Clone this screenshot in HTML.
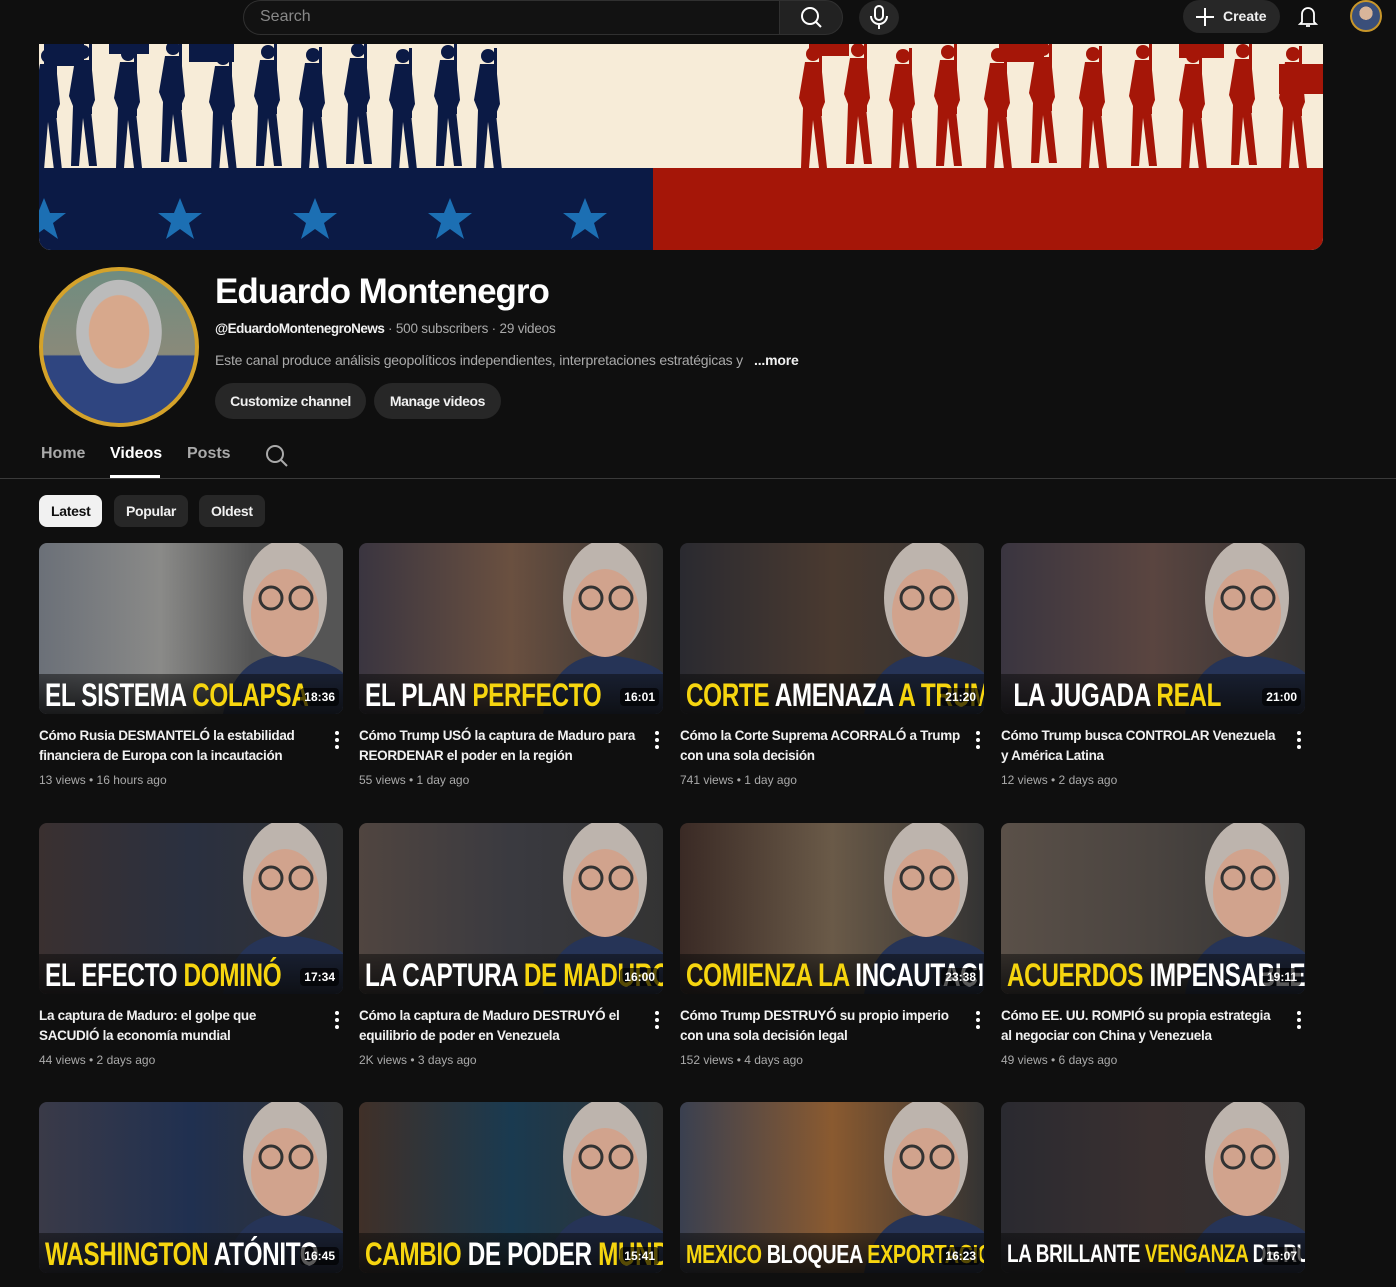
<!DOCTYPE html>
<html><head><meta charset="utf-8">
<style>
*{margin:0;padding:0;box-sizing:border-box}
body{width:1396px;height:1287px;overflow:hidden;background:#0f0f0f;font-family:"Liberation Sans",sans-serif;color:#f1f1f1;position:relative}
.abs{position:absolute}
.search{left:243px;top:0;width:537px;height:35px;border:1px solid #303030;border-right:none;border-radius:18px 0 0 18px;background:#121212;color:#888;font-size:16px;padding:7px 16px}
.sbtn{left:779px;top:0;width:64px;height:35px;background:#222;border:1px solid #303030;border-radius:0 18px 18px 0}
.mic{left:859px;top:0;width:40px;height:35px;border-radius:50%;background:#272727}
.create{left:1183px;top:0;width:97px;height:33px;border-radius:17px;background:#272727;font-size:14px;font-weight:bold;padding:8px 0 0 40px}
.av{left:1350px;top:0;width:32px;height:32px;border-radius:50%;background:radial-gradient(circle at 50% 40%,#d9b59a 0 30%,#3a4f7a 31%);border:2px solid #c8962a}
.big{left:39px;top:267px;width:160px;height:160px;border-radius:50%;border:4px solid #d4a22a;background:radial-gradient(ellipse 28% 34% at 50% 40%,#d7a88c 0 70%,#bbb 72% 100%,transparent 101%),linear-gradient(#6f8c80,#8a8a7a 55%,#2f4580 56%)}
h1{position:absolute;left:215px;top:272px;font-size:35px;font-weight:bold;letter-spacing:-1px;color:#fff}
.sub{left:215px;top:321px;font-size:13.5px;color:#aaa;letter-spacing:-0.2px}
.desc{left:215px;top:352px;font-size:14px;color:#aaa;letter-spacing:-0.2px}
.btn{top:383px;height:36px;border-radius:18px;background:#272727;font-size:14px;font-weight:bold;padding:10px 0;text-align:center;color:#f1f1f1;white-space:nowrap;letter-spacing:-0.4px}
.tab{top:445px;font-size:16px;color:#aaa;font-weight:bold}
.chip{top:495px;height:32px;border-radius:8px;background:#272727;font-size:14px;font-weight:bold;padding:8px 12px;letter-spacing:-0.3px}
.card{position:absolute;width:304px}
.th{position:relative;width:304px;height:171px;border-radius:8px;overflow:hidden}
.cap{position:absolute;left:0;right:0;bottom:0;height:40px;background:linear-gradient(rgba(10,10,10,.5),rgba(10,10,10,.85));white-space:nowrap;overflow:hidden}
.cap span{display:inline-block;font-size:32px;font-weight:bold;transform:scaleX(.76);transform-origin:0 0;margin-top:3px;margin-left:6px;letter-spacing:-0.5px}
.y{color:#f6d50f}.w{color:#fff}
.dur{position:absolute;right:4px;bottom:8px;background:rgba(0,0,0,.65);color:#fff;font-size:12px;font-weight:bold;padding:2px 4px;border-radius:4px}
.tt{margin-top:12px;font-size:13.5px;font-weight:bold;line-height:20px;letter-spacing:-0.3px;width:280px;color:#f1f1f1}
.mt{margin-top:7px;font-size:12px;color:#aaa}
.dots{position:absolute;right:4px;top:188px;width:4px}
.dots i{display:block;width:4px;height:4px;border-radius:50%;background:#fff;margin-bottom:3px}
</style></head><body>

<div class="abs search">Search</div>
<div class="abs sbtn"><svg width="64" height="35"><circle cx="30" cy="15" r="8" fill="none" stroke="#fff" stroke-width="2"/><path d="M36 21l5 5" stroke="#fff" stroke-width="2"/></svg></div>
<div class="abs mic"><svg width="40" height="35"><rect x="16" y="6" width="8" height="14" rx="4" fill="none" stroke="#fff" stroke-width="2"/><path d="M12 16a8 8 0 0 0 16 0M20 24v5" fill="none" stroke="#fff" stroke-width="2"/></svg></div>
<div class="abs create">Create</div>
<svg class="abs" style="left:1194px;top:6px" width="22" height="22"><path d="M11 2v18M2 11h18" stroke="#fff" stroke-width="2"/></svg>
<svg class="abs" style="left:1296px;top:3px" width="24" height="28"><path d="M6 19V11a6 6 0 0 1 12 0v8l2 2H4z M10 23h4" fill="none" stroke="#fff" stroke-width="1.8"/></svg>
<div class="abs av"></div>

<svg class="abs" style="left:39px;top:44px" width="1284" height="206" viewBox="0 0 1284 206">
<defs><clipPath id="bc"><path d="M0 0H1284V194a12 12 0 0 1-12 12H12A12 12 0 0 1 0 194Z"/></clipPath>
<g id="p"><circle cx="14" cy="8" r="7"/><path d="M6 16h16l4 40-4 10 6 56h-8l-6-48-4 48h-8l2-60-4-10z"/><rect x="20" y="0" width="3" height="70"/></g>
<polygon id="s" points="0,-22 6,-7 22,-7 9,3 14,19 0,9 -14,19 -9,3 -22,-7 -6,-7"/></defs>
<g clip-path="url(#bc)">
<rect width="1284" height="206" fill="#f7ecd8"/>
<rect y="124" width="614" height="82" fill="#0b1a45"/>
<rect x="614" y="124" width="670" height="82" fill="#a51608"/>
<g fill="#0b1a45">
<use href="#p" x="-5" y="4"/><use href="#p" x="30" y="0"/><use href="#p" x="75" y="2"/><use href="#p" x="120" y="-4"/><use href="#p" x="170" y="6"/><use href="#p" x="215" y="0"/><use href="#p" x="260" y="3"/><use href="#p" x="305" y="-2"/><use href="#p" x="350" y="4"/><use href="#p" x="395" y="0"/><use href="#p" x="435" y="4"/>
<rect x="5" y="0" width="40" height="22"/><rect x="150" y="0" width="45" height="18"/><rect x="70" y="0" width="40" height="10"/>
</g>
<g fill="#a51608">
<use href="#p" x="760" y="2"/><use href="#p" x="805" y="-2"/><use href="#p" x="850" y="4"/><use href="#p" x="895" y="0"/><use href="#p" x="945" y="3"/><use href="#p" x="990" y="-3"/><use href="#p" x="1040" y="2"/><use href="#p" x="1090" y="0"/><use href="#p" x="1140" y="4"/><use href="#p" x="1190" y="-1"/><use href="#p" x="1240" y="2"/>
<rect x="770" y="0" width="40" height="12"/><rect x="960" y="0" width="45" height="18"/><rect x="1140" y="0" width="45" height="14"/><rect x="1240" y="20" width="44" height="30"/>
</g>
<g fill="#1c6fb3"><use href="#s" x="5" y="176"/><use href="#s" x="141" y="176"/><use href="#s" x="276" y="176"/><use href="#s" x="411" y="176"/><use href="#s" x="546" y="176"/></g>
</g></svg>

<div class="abs big"></div>
<h1>Eduardo Montenegro</h1>
<div class="abs sub"><b style="color:#f1f1f1;letter-spacing:-0.5px">@EduardoMontenegroNews</b> · 500 subscribers · 29 videos</div>
<div class="abs desc">Este canal produce análisis geopolíticos independientes, interpretaciones estratégicas y &nbsp;&nbsp;<b style="color:#f1f1f1">...more</b></div>
<div class="abs btn" style="left:215px;width:151px">Customize channel</div>
<div class="abs btn" style="left:374px;width:127px">Manage videos</div>
<div class="abs tab" style="left:41px">Home</div>
<div class="abs tab" style="left:110px;color:#fff">Videos</div>
<div class="abs" style="left:110px;top:475px;width:50px;height:3px;background:#fff"></div>
<div class="abs tab" style="left:187px">Posts</div>
<svg class="abs" style="left:264px;top:443px" width="26" height="26"><circle cx="11" cy="11" r="8" fill="none" stroke="#aaa" stroke-width="2"/><path d="M17 17l6 6" stroke="#aaa" stroke-width="2"/></svg>
<div class="abs" style="left:0;top:478px;width:1396px;height:1px;background:#3a3a3a"></div>
<div class="abs chip" style="left:39px;background:#f1f1f1;color:#0f0f0f">Latest</div>
<div class="abs chip" style="left:114px">Popular</div>
<div class="abs chip" style="left:199px">Oldest</div>

<div class="card" style="left:39px;top:543px"><div class="th" style="background:linear-gradient(90deg,#6b7078,#8a8a88 40%,#555 70%)"><svg class="abs" style="right:0;top:0" width="120" height="171"><path d="M0 171C10 120 40 112 60 112S110 120 120 130V171Z" fill="#263457"/><ellipse cx="62" cy="55" rx="42" ry="58" fill="#bdb4ad"/><ellipse cx="62" cy="70" rx="34" ry="44" fill="#d1a38d"/><circle cx="48" cy="55" r="11" fill="none" stroke="#333" stroke-width="3"/><circle cx="78" cy="55" r="11" fill="none" stroke="#333" stroke-width="3"/></svg><div class="cap"><span><b class="w">EL SISTEMA </b><b class="y">COLAPSA</b></span></div><div class="dur">18:36</div></div>
<div class="tt">Cómo Rusia DESMANTELÓ la estabilidad financiera de Europa con la incautación</div><div class="mt">13 views • 16 hours ago</div><div class="dots"><i></i><i></i><i></i></div></div>

<div class="card" style="left:359px;top:543px"><div class="th" style="background:linear-gradient(90deg,#3a3540,#6a5040 50%,#333)"><svg class="abs" style="right:0;top:0" width="120" height="171"><path d="M0 171C10 120 40 112 60 112S110 120 120 130V171Z" fill="#263457"/><ellipse cx="62" cy="55" rx="42" ry="58" fill="#bdb4ad"/><ellipse cx="62" cy="70" rx="34" ry="44" fill="#d1a38d"/><circle cx="48" cy="55" r="11" fill="none" stroke="#333" stroke-width="3"/><circle cx="78" cy="55" r="11" fill="none" stroke="#333" stroke-width="3"/></svg><div class="cap"><span><b class="w">EL PLAN </b><b class="y">PERFECTO</b></span></div><div class="dur">16:01</div></div>
<div class="tt">Cómo Trump USÓ la captura de Maduro para REORDENAR el poder en la región</div><div class="mt">55 views • 1 day ago</div><div class="dots"><i></i><i></i><i></i></div></div>

<div class="card" style="left:680px;top:543px"><div class="th" style="background:linear-gradient(90deg,#2a2a30,#4a3a30 50%,#333)"><svg class="abs" style="right:0;top:0" width="120" height="171"><path d="M0 171C10 120 40 112 60 112S110 120 120 130V171Z" fill="#263457"/><ellipse cx="62" cy="55" rx="42" ry="58" fill="#bdb4ad"/><ellipse cx="62" cy="70" rx="34" ry="44" fill="#d1a38d"/><circle cx="48" cy="55" r="11" fill="none" stroke="#333" stroke-width="3"/><circle cx="78" cy="55" r="11" fill="none" stroke="#333" stroke-width="3"/></svg><div class="cap"><span><b class="y">CORTE </b><b class="w">AMENAZA </b><b class="y">A TRUMP</b></span></div><div class="dur">21:20</div></div>
<div class="tt">Cómo la Corte Suprema ACORRALÓ a Trump con una sola decisión</div><div class="mt">741 views • 1 day ago</div><div class="dots"><i></i><i></i><i></i></div></div>

<div class="card" style="left:1001px;top:543px"><div class="th" style="background:linear-gradient(90deg,#3a3540,#5a4540 50%,#333)"><svg class="abs" style="right:0;top:0" width="120" height="171"><path d="M0 171C10 120 40 112 60 112S110 120 120 130V171Z" fill="#263457"/><ellipse cx="62" cy="55" rx="42" ry="58" fill="#bdb4ad"/><ellipse cx="62" cy="70" rx="34" ry="44" fill="#d1a38d"/><circle cx="48" cy="55" r="11" fill="none" stroke="#333" stroke-width="3"/><circle cx="78" cy="55" r="11" fill="none" stroke="#333" stroke-width="3"/></svg><div class="cap"><span><b class="w">&nbsp;LA JUGADA </b><b class="y">REAL</b></span></div><div class="dur">21:00</div></div>
<div class="tt">Cómo Trump busca CONTROLAR Venezuela y América Latina</div><div class="mt">12 views • 2 days ago</div><div class="dots"><i></i><i></i><i></i></div></div>

<div class="card" style="left:39px;top:823px"><div class="th" style="background:linear-gradient(90deg,#3a3030,#2a3040 50%,#333)"><svg class="abs" style="right:0;top:0" width="120" height="171"><path d="M0 171C10 120 40 112 60 112S110 120 120 130V171Z" fill="#263457"/><ellipse cx="62" cy="55" rx="42" ry="58" fill="#bdb4ad"/><ellipse cx="62" cy="70" rx="34" ry="44" fill="#d1a38d"/><circle cx="48" cy="55" r="11" fill="none" stroke="#333" stroke-width="3"/><circle cx="78" cy="55" r="11" fill="none" stroke="#333" stroke-width="3"/></svg><div class="cap"><span><b class="w">EL EFECTO </b><b class="y">DOMINÓ</b></span></div><div class="dur">17:34</div></div>
<div class="tt">La captura de Maduro: el golpe que SACUDIÓ la economía mundial</div><div class="mt">44 views • 2 days ago</div><div class="dots"><i></i><i></i><i></i></div></div>

<div class="card" style="left:359px;top:823px"><div class="th" style="background:linear-gradient(90deg,#504540,#3a3a40 50%,#333)"><svg class="abs" style="right:0;top:0" width="120" height="171"><path d="M0 171C10 120 40 112 60 112S110 120 120 130V171Z" fill="#263457"/><ellipse cx="62" cy="55" rx="42" ry="58" fill="#bdb4ad"/><ellipse cx="62" cy="70" rx="34" ry="44" fill="#d1a38d"/><circle cx="48" cy="55" r="11" fill="none" stroke="#333" stroke-width="3"/><circle cx="78" cy="55" r="11" fill="none" stroke="#333" stroke-width="3"/></svg><div class="cap"><span><b class="w">LA CAPTURA </b><b class="y">DE MADURO</b></span></div><div class="dur">16:00</div></div>
<div class="tt">Cómo la captura de Maduro DESTRUYÓ el equilibrio de poder en Venezuela</div><div class="mt">2K views • 3 days ago</div><div class="dots"><i></i><i></i><i></i></div></div>

<div class="card" style="left:680px;top:823px"><div class="th" style="background:linear-gradient(90deg,#3a2a25,#6a5a48 50%,#333)"><svg class="abs" style="right:0;top:0" width="120" height="171"><path d="M0 171C10 120 40 112 60 112S110 120 120 130V171Z" fill="#263457"/><ellipse cx="62" cy="55" rx="42" ry="58" fill="#bdb4ad"/><ellipse cx="62" cy="70" rx="34" ry="44" fill="#d1a38d"/><circle cx="48" cy="55" r="11" fill="none" stroke="#333" stroke-width="3"/><circle cx="78" cy="55" r="11" fill="none" stroke="#333" stroke-width="3"/></svg><div class="cap"><span><b class="y">COMIENZA LA </b><b class="w">INCAUTACIÓN</b></span></div><div class="dur">23:38</div></div>
<div class="tt">Cómo Trump DESTRUYÓ su propio imperio con una sola decisión legal</div><div class="mt">152 views • 4 days ago</div><div class="dots"><i></i><i></i><i></i></div></div>

<div class="card" style="left:1001px;top:823px"><div class="th" style="background:linear-gradient(90deg,#5a5048,#4a4440 50%,#333)"><svg class="abs" style="right:0;top:0" width="120" height="171"><path d="M0 171C10 120 40 112 60 112S110 120 120 130V171Z" fill="#263457"/><ellipse cx="62" cy="55" rx="42" ry="58" fill="#bdb4ad"/><ellipse cx="62" cy="70" rx="34" ry="44" fill="#d1a38d"/><circle cx="48" cy="55" r="11" fill="none" stroke="#333" stroke-width="3"/><circle cx="78" cy="55" r="11" fill="none" stroke="#333" stroke-width="3"/></svg><div class="cap"><span><b class="y">ACUERDOS </b><b class="w">IMPENSABLES</b></span></div><div class="dur">19:11</div></div>
<div class="tt">Cómo EE. UU. ROMPIÓ su propia estrategia al negociar con China y Venezuela</div><div class="mt">49 views • 6 days ago</div><div class="dots"><i></i><i></i><i></i></div></div>

<div class="card" style="left:39px;top:1102px"><div class="th" style="background:linear-gradient(90deg,#3a3a48,#203050 50%,#333)"><svg class="abs" style="right:0;top:0" width="120" height="171"><path d="M0 171C10 120 40 112 60 112S110 120 120 130V171Z" fill="#263457"/><ellipse cx="62" cy="55" rx="42" ry="58" fill="#bdb4ad"/><ellipse cx="62" cy="70" rx="34" ry="44" fill="#d1a38d"/><circle cx="48" cy="55" r="11" fill="none" stroke="#333" stroke-width="3"/><circle cx="78" cy="55" r="11" fill="none" stroke="#333" stroke-width="3"/></svg><div class="cap"><span><b class="y">WASHINGTON </b><b class="w">ATÓNITO</b></span></div><div class="dur">16:45</div></div></div>

<div class="card" style="left:359px;top:1102px"><div class="th" style="background:linear-gradient(90deg,#403028,#1a3a50 50%,#333)"><svg class="abs" style="right:0;top:0" width="120" height="171"><path d="M0 171C10 120 40 112 60 112S110 120 120 130V171Z" fill="#263457"/><ellipse cx="62" cy="55" rx="42" ry="58" fill="#bdb4ad"/><ellipse cx="62" cy="70" rx="34" ry="44" fill="#d1a38d"/><circle cx="48" cy="55" r="11" fill="none" stroke="#333" stroke-width="3"/><circle cx="78" cy="55" r="11" fill="none" stroke="#333" stroke-width="3"/></svg><div class="cap"><span><b class="y">CAMBIO </b><b class="w">DE PODER </b><b class="y">MUNDIAL</b></span></div><div class="dur">15:41</div></div></div>

<div class="card" style="left:680px;top:1102px"><div class="th" style="background:linear-gradient(90deg,#3a4050,#8a5a30 50%,#333)"><svg class="abs" style="right:0;top:0" width="120" height="171"><path d="M0 171C10 120 40 112 60 112S110 120 120 130V171Z" fill="#263457"/><ellipse cx="62" cy="55" rx="42" ry="58" fill="#bdb4ad"/><ellipse cx="62" cy="70" rx="34" ry="44" fill="#d1a38d"/><circle cx="48" cy="55" r="11" fill="none" stroke="#333" stroke-width="3"/><circle cx="78" cy="55" r="11" fill="none" stroke="#333" stroke-width="3"/></svg><div class="cap"><span style="font-size:26px;margin-top:6px"><b class="y">MEXICO </b><b class="w">BLOQUEA </b><b class="y">EXPORTACIONES</b></span></div><div class="dur">16:23</div></div></div>

<div class="card" style="left:1001px;top:1102px"><div class="th" style="background:linear-gradient(90deg,#2a2a30,#3a3030 50%,#333)"><svg class="abs" style="right:0;top:0" width="120" height="171"><path d="M0 171C10 120 40 112 60 112S110 120 120 130V171Z" fill="#263457"/><ellipse cx="62" cy="55" rx="42" ry="58" fill="#bdb4ad"/><ellipse cx="62" cy="70" rx="34" ry="44" fill="#d1a38d"/><circle cx="48" cy="55" r="11" fill="none" stroke="#333" stroke-width="3"/><circle cx="78" cy="55" r="11" fill="none" stroke="#333" stroke-width="3"/></svg><div class="cap"><span style="font-size:25px;margin-top:7px"><b class="w">LA BRILLANTE </b><b class="y">VENGANZA </b><b class="w">DE RUSIA!</b></span></div><div class="dur">16:07</div></div></div>

</body></html>
